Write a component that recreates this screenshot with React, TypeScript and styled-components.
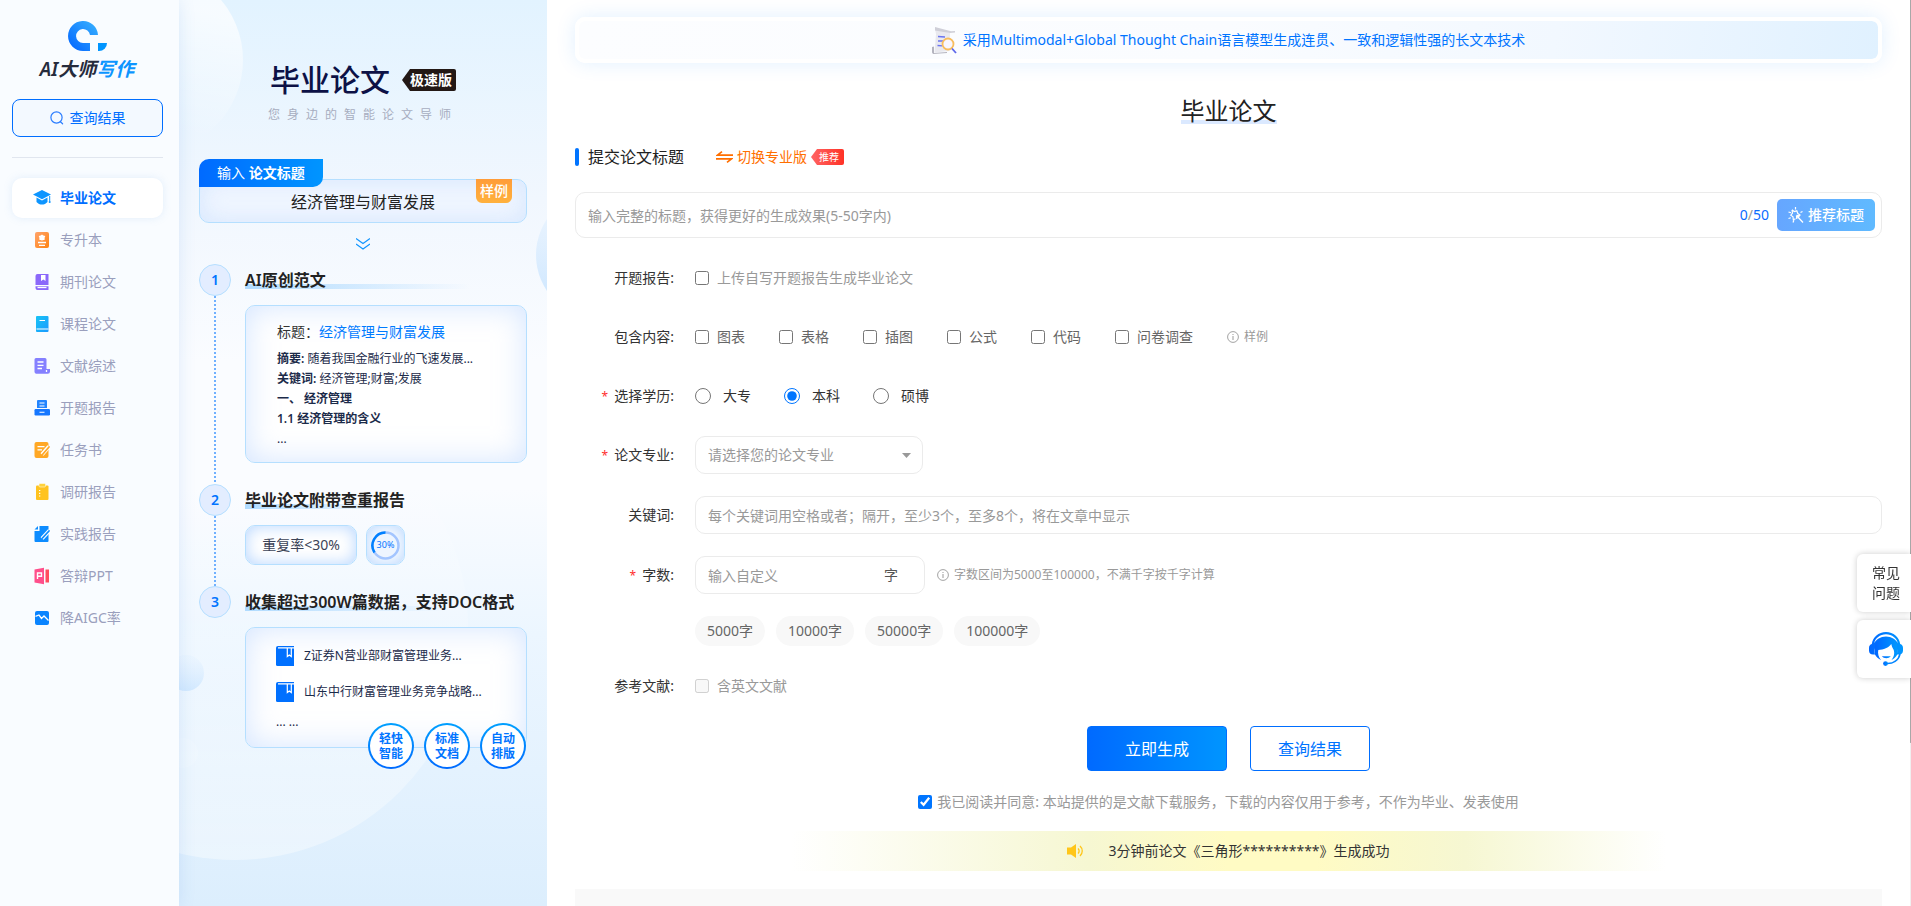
import React, { useState } from "react";
import styled, { createGlobalStyle } from "styled-components";

const GlobalStyle = createGlobalStyle`
  *, *::before, *::after { box-sizing: border-box; }
  body {
    margin: 0;
    background: #fff;
    color: #222;
    font: 14px/20px "Noto Sans", "Noto Sans CJK SC", sans-serif;
  }
  button, input, select { font: inherit; color: inherit; }
  button { cursor: pointer; }
  a { text-decoration: none; color: inherit; }
  h1, h2, h3, p, ul, ol { margin: 0; padding: 0; font-weight: 400; list-style: none; }
  svg { display: block; flex: none; }
`;

/* ---------- page ---------- */

const Page = styled.div`
  display: flex;
  align-items: stretch;
  min-height: 100vh;
`;

/* ---------- sidebar ---------- */

const Sidebar = styled.aside`
  position: relative;
  z-index: 1;
  flex: 0 0 179px;
  padding: 21px 16px 0 12px;
  background: #f9fcff;
  box-shadow: 0 0 16px rgba(60, 130, 220, 0.14);
`;

const Logo = styled.a`
  display: flex;
  flex-direction: column;
  align-items: center;
  gap: 6px;
  margin-left: -1px;
`;

const LogoName = styled.span`
  font-size: 19px;
  line-height: 24px;
  font-weight: 600;
  font-style: italic;
  color: #262b3c;

  b {
    font-weight: 600;
    color: #0d95ff;
  }
`;

const LookupButton = styled.button`
  display: flex;
  align-items: center;
  justify-content: center;
  gap: 6px;
  width: 100%;
  height: 38px;
  margin: 18px 0 20px;
  padding: 0;
  border: 1px solid #006eff;
  border-radius: 8px;
  background: #f3f9ff;
  color: #006eff;
`;

const NavList = styled.ul`
  display: flex;
  flex-direction: column;
  gap: 2px;
  padding-top: 20px;
  border-top: 1px solid #e1e6ef;
`;

const NavLink = styled.a<{ $active?: boolean }>`
  display: flex;
  align-items: center;
  gap: 9px;
  height: 40px;
  padding-left: 21px;
  border-radius: 10px;
  color: ${(p) => (p.$active ? "#006eff" : "#9a9fbd")};
  font-weight: ${(p) => (p.$active ? 700 : 400)};
  background: ${(p) => (p.$active ? "#fff" : "transparent")};
  box-shadow: ${(p) => (p.$active ? "0 0 8px rgba(120, 170, 230, 0.18)" : "none")};
`;

/* ---------- introduction panel ---------- */

const Intro = styled.section`
  position: relative;
  flex: 0 0 368px;
  padding: 60px 20px 0;
  overflow: hidden;
  background: linear-gradient(180deg, #e2f3ff 0%, #f1f7fe 22%, #fafcff 40%, #fafcff 54%, #ecf6ff 70%, #dceefd 100%);
`;

const Backdrop = styled.svg`
  position: absolute;
  top: 0;
  left: 0;
`;

const IntroBody = styled.div`
  position: relative;
`;

const IntroHead = styled.header`
  display: flex;
  flex-direction: column;
  align-items: center;
`;

const IntroTitle = styled.h2`
  display: flex;
  align-items: center;
  gap: 12px;
  font-size: 30px;
  line-height: 40px;
  font-weight: 500;
  color: #0c1146;
`;

const EditionTag = styled.span`
  height: 22px;
  padding: 0 4px 0 8px;
  border-radius: 2px;
  background: #231815;
  color: #fff;
  font-size: 14px;
  line-height: 22px;
  font-weight: 700;
  clip-path: polygon(8px 0, 100% 0, 100% 100%, 8px 100%, 0 50%);
`;

const IntroSlogan = styled.p`
  margin-top: 5px;
  font-size: 12px;
  letter-spacing: 7px;
  color: #a7adc0;
`;

const SampleTitle = styled.div`
  position: relative;
  display: flex;
  align-items: center;
  justify-content: center;
  height: 44px;
  margin-top: 54px;
  padding-top: 2px;
  border: 1px solid #b5dfff;
  border-radius: 10px;
  background: #f0f6ff;
  box-shadow: inset 0 0 24px rgba(176, 208, 252, 0.4);
  font-size: 16px;
`;

const SampleTab = styled.span`
  position: absolute;
  top: -21px;
  left: -1px;
  width: 124px;
  height: 28px;
  padding-left: 18px;
  border-radius: 10px 0 10px 0;
  background: linear-gradient(90deg, #006aff, #0095ff);
  color: #fff;
  font-size: 14px;
  line-height: 28px;
`;

const SampleMark = styled.span`
  position: absolute;
  top: -1px;
  right: 14px;
  padding: 0 4px;
  border-radius: 0 0 6px 6px;
  background: linear-gradient(180deg, #ff9c38, #ffb13d);
  color: #fff;
  font-size: 14px;
  line-height: 24px;
  font-weight: 500;
`;

const Arrows = styled.div`
  display: flex;
  align-items: center;
  justify-content: center;
  height: 41px;
`;

const Step = styled.li`
  display: grid;
  grid-template-columns: 32px 1fr;
  column-gap: 14px;
`;

const StepRail = styled.div`
  display: flex;
  flex-direction: column;
  align-items: center;

  &::after {
    content: "";
    flex: 1;
    width: 2px;
    background: repeating-linear-gradient(180deg, #6fb0ff 0 2px, transparent 2px 4px);
  }

  ${Step}:last-child &::after {
    display: none;
  }
`;

const StepNumber = styled.span`
  width: 32px;
  height: 32px;
  border: 1px solid #b5dfff;
  border-radius: 50%;
  background: #e3edff;
  color: #0074ff;
  font-weight: 600;
  line-height: 30px;
  text-align: center;
`;

const StepBody = styled.div`
  padding-bottom: 21px;
`;

const StepTitle = styled.h3<{ $mark: number }>`
  margin-bottom: 9px;
  background: linear-gradient(90deg, #b0dbff, rgba(176, 219, 255, 0)) 0 20px / ${(p) => p.$mark}px 5px no-repeat;
  font-size: 16px;
  line-height: 32px;
  font-weight: 600;
  white-space: nowrap;
`;

const Card = styled.div`
  border: 1px solid #b5dfff;
  border-radius: 10px;
  background: #fff;
  box-shadow: inset 0 0 30px rgba(170, 203, 255, 0.5);
`;

const PaperCard = styled(Card)`
  height: 158px;
  padding: 16px 31px;
  color: #1c2b4a;
  font-size: 12px;

  h4 {
    margin: 0 0 7px;
    color: #333;
    font-size: 14px;
    font-weight: 400;
  }

  em {
    color: #007bff;
    font-style: normal;
  }

  b {
    font-weight: 600;
  }
`;

const RateRow = styled.div`
  display: flex;
  gap: 9px;
`;

const RateCard = styled(Card)<{ $width: number }>`
  display: flex;
  align-items: center;
  justify-content: center;
  width: ${(p) => p.$width}px;
  height: 40px;
  box-shadow: inset 0 0 16px rgba(150, 195, 255, 0.7);
  color: #3b4357;
`;

const Ring = styled.span`
  display: grid;
  place-items: center;

  svg,
  span {
    grid-area: 1 / 1;
  }

  span {
    color: #0074ff;
    font-size: 9px;
    line-height: 12px;
  }
`;

const DataCard = styled(Card)`
  position: relative;
  height: 121px;
  padding: 18px 30px;
  color: #1c2b4a;
  font-size: 12px;
`;

const DataList = styled.ul`
  display: flex;
  flex-direction: column;
  gap: 16px;
  margin-bottom: 10px;
`;

const DataItem = styled.li`
  display: flex;
  align-items: center;
  gap: 10px;
`;

const Perks = styled.div`
  position: absolute;
  right: 0;
  bottom: -22px;
  display: flex;
  gap: 10px;
`;

const Perk = styled.span`
  display: flex;
  align-items: center;
  width: 46px;
  height: 46px;
  padding: 0 9px;
  border: 2px solid transparent;
  border-radius: 50%;
  background:
    linear-gradient(#fff, #fff) padding-box,
    linear-gradient(180deg, #00a0ff, #006aff) border-box;
  color: #0074ff;
  font-size: 12px;
  line-height: 15px;
  font-weight: 700;
`;

/* ---------- main column ---------- */

const Main = styled.main`
  flex: 1;
  min-width: 0;
  display: flex;
  flex-direction: column;
  padding: 17px 29px 0 28px;
`;

const Banner = styled.div`
  display: flex;
  align-items: center;
  justify-content: center;
  gap: 6px;
  height: 46px;
  border: 4px solid #fff;
  border-radius: 10px;
  background: linear-gradient(100deg, #fcfdff 0%, #fafcff 50%, #f2f8ff 75%, #e0f1ff 100%);
  background-clip: padding-box;
  box-shadow: 0 0 20px rgba(0, 132, 255, 0.12);
  color: #0074ff;
`;

const PageTitle = styled.h1`
  align-self: center;
  margin: 31px 0 19px;
  background: linear-gradient(#dbe9ff, #dbe9ff) 0 26px / 100% 4px no-repeat;
  font-size: 24px;
  line-height: 34px;
`;

const SectionHead = styled.div`
  display: flex;
  align-items: center;
  height: 20px;
  margin-bottom: 25px;
`;

const SectionTitle = styled.h2`
  display: flex;
  align-items: center;
  gap: 9px;
  margin-right: 32px;
  font-size: 16px;
  line-height: 20px;

  &::before {
    content: "";
    width: 4px;
    height: 18px;
    border-radius: 2px;
    background: #0074ff;
  }
`;

const SwitchLink = styled.a`
  display: flex;
  align-items: center;
  gap: 4px;
  color: #ff6f00;
`;

const HotTag = styled.span`
  padding: 0 5px 0 8px;
  border-radius: 2px;
  background: linear-gradient(90deg, #ff6464, #ff3226);
  clip-path: polygon(6px 0, 100% 0, 100% 100%, 6px 100%, 0 50%);
  color: #fff;
  font-size: 10px;
  line-height: 16px;
`;

const TitleField = styled.div`
  display: flex;
  align-items: center;
  height: 46px;
  padding: 0 6px 0 12px;
  border: 1px solid #ebebeb;
  border-radius: 10px;
`;

const BareInput = styled.input`
  flex: 1;
  min-width: 0;
  height: 36px;
  padding: 0;
  border: 0;
  outline: 0;
  background: transparent;
  color: #333;

  &::placeholder {
    color: #999;
    opacity: 1;
  }
`;

const Counter = styled.span`
  margin: 0 8px;
  color: #999;

  b {
    font-weight: 400;
    color: #0a6cff;
  }
`;

const SuggestButton = styled.button`
  display: flex;
  align-items: center;
  gap: 4px;
  height: 32px;
  padding: 0 11px;
  border: 0;
  border-radius: 5px;
  background: linear-gradient(90deg, #66a6ff, #60baff);
  color: #fff;
  font-weight: 500;
`;

const Form = styled.form`
  display: flex;
  flex-direction: column;
  gap: 21px;
  padding-top: 21px;
`;

const FieldGroup = styled.div`
  display: flex;
  flex-direction: column;
  gap: 22px;
`;

const Row = styled.div<{ $tight?: boolean }>`
  display: grid;
  grid-template-columns: 99px 1fr;
  column-gap: 21px;
  align-items: center;
  min-height: ${(p) => (p.$tight ? 30 : 38)}px;
`;

const RowLabel = styled.span<{ $required?: boolean }>`
  text-align: right;
  color: #333;

  &::before {
    content: ${(p) => (p.$required ? '"*"' : "none")};
    margin-right: 6px;
    font-size: 12px;
    color: #ff2d2d;
  }
`;

const Options = styled.div<{ $gap: number }>`
  display: flex;
  align-items: center;
  gap: ${(p) => p.$gap}px;
`;

const CheckLabel = styled.label<{ $tone?: string }>`
  display: flex;
  align-items: center;
  gap: 8px;
  color: ${(p) => p.$tone || "#666"};

  input {
    width: 14px;
    height: 14px;
    margin: 0;
    accent-color: #0075ff;
  }
`;

const RadioLabel = styled.label`
  display: flex;
  align-items: center;
  gap: 12px;
  color: #333;

  input {
    width: 16px;
    height: 16px;
    margin: 0;
    accent-color: #0075ff;
  }
`;

const Hint = styled.span`
  display: flex;
  align-items: center;
  gap: 5px;
  color: #999;
  font-size: 12px;
`;

const HintLink = styled(Hint).attrs({ as: "a", href: "#sample" })``;

const SelectWrap = styled.div`
  display: grid;
  align-items: center;
  width: 228px;

  select,
  svg {
    grid-area: 1 / 1;
  }

  svg {
    justify-self: end;
    margin-right: 12px;
    pointer-events: none;
  }
`;

const MajorSelect = styled.select`
  appearance: none;
  width: 100%;
  height: 38px;
  padding: 0 30px 0 12px;
  border: 1px solid #ebebeb;
  border-radius: 10px;
  outline: 0;
  background: #fff;
  color: #999;
`;

const Field = styled.div<{ $width?: number }>`
  display: flex;
  align-items: center;
  width: ${(p) => (p.$width ? p.$width + "px" : "100%")};
  height: 38px;
  padding: 0 26px 0 12px;
  border: 1px solid #ebebeb;
  border-radius: 10px;
  color: #555;
`;

const PresetButton = styled.button`
  height: 30px;
  padding: 0 12px;
  border: 0;
  border-radius: 15px;
  background: #f8f8f8;
  color: #666;
`;

const Actions = styled.div`
  display: flex;
  justify-content: center;
  gap: 23px;
`;

const ActionButton = styled.button<{ $primary?: boolean }>`
  width: ${(p) => (p.$primary ? 140 : 120)}px;
  height: 45px;
  padding: 0;
  border: 1px solid #006eff;
  border-radius: 4px;
  background: ${(p) => (p.$primary ? "linear-gradient(90deg, #006aff, #0095ff)" : "#fff")};
  color: ${(p) => (p.$primary ? "#fff" : "#0074ff")};
  font-size: 16px;
`;

const Agreement = styled(CheckLabel)`
  justify-content: center;
  gap: 5px;
  padding-right: 20px;
`;

const Notice = styled.p`
  display: flex;
  align-items: center;
  justify-content: center;
  gap: 24px;
  width: 67%;
  height: 40px;
  margin: 19px auto 18px;
  background: linear-gradient(
    90deg,
    rgba(246, 247, 208, 0) 0%,
    #f6f7d2 34%,
    #fffbc4 50%,
    #fffbc4 60%,
    #f6f7d2 77%,
    rgba(246, 247, 208, 0) 100%
  );
  color: #333;
`;

const Footer = styled.footer`
  flex: 1;
  min-height: 17px;
  background: #f9f9f9;
`;

/* ---------- floating tools ---------- */

const FloatTools = styled.div`
  position: fixed;
  right: 0;
  top: 554px;
  z-index: 2;
  display: flex;
  flex-direction: column;
  gap: 8px;
`;

const FloatButton = styled.button`
  display: flex;
  align-items: center;
  justify-content: center;
  width: 54px;
  height: 58px;
  padding: 0 7px 0 11px;
  border: 0;
  border-radius: 6px 0 0 6px;
  background: #fff;
  box-shadow: 0 0 6px rgba(0, 0, 0, 0.2);
  color: #333;
`;

const ScrollTrack = styled.div`
  position: fixed;
  top: 0;
  right: 0;
  bottom: 0;
  width: 1px;
  background: linear-gradient(#a8a8a8, #a8a8a8) 0 0 / 100% 82% no-repeat #f0f0f0;
`;

/* ---------- drawings ---------- */

const LogoMark = () => (
  <svg width="39" height="30" viewBox="0 0 39 30">
    <defs>
      <linearGradient id="lg" x1="0" y1="1" x2="1" y2="0">
        <stop offset="0" stopColor="#0062ff" />
        <stop offset="1" stopColor="#3ab4ff" />
      </linearGradient>
    </defs>
    <path d="M22 30h-7A15 15 0 1 1 30 14H22A7 7 0 1 0 15 22h7z" fill="url(#lg)" />
    <path d="M30 22h9a8 8 0 0 1-8 8h-1z" fill="#0095ff" />
  </svg>
);

const SearchIcon = () => (
  <svg width="14" height="14" viewBox="0 0 14 14" fill="none" stroke="#2a7dff" strokeWidth="1.2">
    <circle cx="6.5" cy="6.5" r="5.6" />
    <path d="M10.4 10.8l2.2 2" strokeLinecap="round" />
  </svg>
);

const navIcons: Record<string, React.ReactNode> = {
  cap: (
    <>
      <path d="M9 1L0 5.6l9 4.6 9-4.6z" fill="#0d95ff" />
      <path d="M3.5 8.6V13c2.8 3.4 8.2 3.4 11 0V8.6L9 11.6z" fill="#0d95ff" />
      <path d="M16.7 7v5.2" stroke="#0d95ff" />
      <circle cx="16.7" cy="13" r="1" fill="#0d95ff" />
    </>
  ),
  badge: (
    <>
      <rect x="2" y="1" width="14" height="16" rx="2" fill="url(#ni-orange)" />
      <path d="M9 3.400l1.400 1.100 1.900.600-.700 1.700.100 2L9 9.600 6.300 8.800l.100-2-.700-1.700 1.900-.600z" fill="#fff" />
      <path d="M5 11.500h8M6 14.300h6" stroke="#fff" strokeWidth="1.300" />
    </>
  ),
  journal: (
    <>
      <path d="M4.500 1H15.500v11H2.500V3A2 2 0 0 1 4.500 1zM2.500 13.200h13V17H4.500A2 2 0 0 1 2.500 15z" fill="#8b68fa" />
      <path d="M8 2h4.500v6l-2.200-1.500L8 8z" fill="#fff" />
      <path d="M4.500 14.500h9" stroke="#fff" strokeWidth="1.300" />
    </>
  ),
  book: (
    <>
      <rect x="3" y="1" width="12.500" height="16" rx="1" fill="url(#ni-cyan)" />
      <path d="M6.500 5.500H12M3.500 14h12" stroke="#fff" strokeWidth="1.200" />
    </>
  ),
  review: (
    <>
      <path d="M3 1h9a1.500 1.500 0 0 1 1.500 1.500V12H17v2.500a2.200 2.200 0 0 1-2.200 2.200H3.300A2 2 0 0 1 1.500 15V2.500A1.500 1.500 0 0 1 3 1z" fill="#8580ff" />
      <path d="M4.500 5h6M4.500 8.300h6M4.500 11.500h4.500M13.500 13v2" stroke="#fff" strokeWidth="1.300" />
    </>
  ),
  printer: (
    <>
      <path d="M5 1h8a1 1 0 0 1 1 1v7H4V2a1 1 0 0 1 1-1z" fill="#2385ff" />
      <rect x="1.500" y="10" width="15.500" height="6.500" rx="1.200" fill="#1677ff" />
      <path d="M6.500 4h5M6.500 7h5M6.500 13.300h5" stroke="#fff" strokeWidth="1.100" />
    </>
  ),
  task: (
    <>
      <rect x="1.500" y="1" width="14" height="16" rx="2" fill="#ffa826" />
      <path d="M4.500 5.700h7M4.500 8.800h4.500" stroke="#fff" strokeWidth="1.200" />
      <path d="M16 5.500L9 13.500" stroke="#fff" strokeWidth="4" />
      <path d="M16 6L9.500 13.500" stroke="#ffa826" strokeWidth="1.800" strokeLinecap="round" />
    </>
  ),
  survey: (
    <>
      <rect x="3" y="2.500" width="12.500" height="14.500" rx="1" fill="#ffc320" />
      <rect x="6" y="0.500" width="6.500" height="3.500" rx="1" fill="#ffd23b" stroke="#fff" strokeWidth="0.500" />
      <path d="M6 7.500h1.300M6 10.300h1.300M6 13h1.300" stroke="#fff" strokeWidth="1.200" />
    </>
  ),
  practice: (
    <>
      <path d="M6.500 1H15.500v15a1 1 0 0 1-1 1H2.500a1 1 0 0 1-1-1V6H6.500z" fill="#0d8cff" />
      <path d="M1.500 4.500L5 1v3.500z" fill="#0d8cff" />
      <path d="M16.500 5.500L9 13.500" stroke="#fff" strokeWidth="4" />
      <path d="M16 6L9.500 13" stroke="#0d8cff" strokeWidth="1.800" strokeLinecap="round" />
    </>
  ),
  slides: (
    <>
      <path d="M1.500 2.500L11 .800v16.400l-9.500-1.700z" fill="#ff4f8b" />
      <path d="M12.500 2.500H16v13h-3.500z" fill="#ff4d5f" />
      <path d="M4.500 12V6h4v3.300h-4" stroke="#fff" strokeWidth="1.400" fill="none" />
    </>
  ),
  chart: (
    <>
      <rect x="2" y="2" width="14" height="14" rx="2" fill="#0a84ff" />
      <path d="M2.500 7.300L6 6l2.500 3.500L11 7l4.500 4.500" stroke="#fff" strokeWidth="1.300" fill="none" />
    </>
  ),
};

const NavIcon = ({ name }: { name: string }) => (
  <svg width="18" height="18" viewBox="0 0 18 18">
    <defs>
      <linearGradient id="ni-orange" x1="0" y1="0" x2="1" y2="1">
        <stop offset="0" stopColor="#ffa36b" />
        <stop offset="1" stopColor="#ff8412" />
      </linearGradient>
      <linearGradient id="ni-cyan" x1="0" y1="0" x2="1" y2="1">
        <stop offset="0" stopColor="#18c4f5" />
        <stop offset="1" stopColor="#1b9aff" />
      </linearGradient>
    </defs>
    {navIcons[name]}
  </svg>
);

const IntroBackdrop = () => (
  <Backdrop width="368" height="906" viewBox="0 0 368 906">
    <defs>
      <linearGradient id="b1" x1="0.6" y1="0" x2="0.4" y2="1">
        <stop offset="0.2" stopColor="#fff" stopOpacity="0.7" />
        <stop offset="0.85" stopColor="#fff" stopOpacity="0" />
      </linearGradient>
      <linearGradient id="b2" x1="0" y1="0" x2="0" y2="1">
        <stop offset="0" stopColor="#fff" stopOpacity="0" />
        <stop offset="1" stopColor="#fff" stopOpacity="0.38" />
      </linearGradient>
      <linearGradient id="b3" x1="0" y1="0" x2="0" y2="1">
        <stop offset="0.1" stopColor="#cfe7ff" stopOpacity="0.2" />
        <stop offset="1" stopColor="#c6e3ff" />
      </linearGradient>
    </defs>
    <circle cx="-29" cy="60" r="93" fill="url(#b1)" />
    <circle cx="56" cy="627" r="233" fill="url(#b2)" />
    <circle cx="421" cy="255" r="64" fill="url(#b3)" />
    <circle cx="7" cy="673" r="18" fill="url(#b3)" opacity="0.7" />
    <circle cx="4" cy="753" r="15" fill="#fff" opacity="0.15" />
  </Backdrop>
);

const DoubleChevron = () => (
  <svg width="14" height="12" viewBox="0 0 14 12" fill="none" stroke="#1296ff" strokeWidth="1.200">
    <path d="M0 .500l7 5 7-5M0 6l7 5 7-5" />
  </svg>
);

const RateRing = () => (
  <Ring>
    <svg width="29" height="29" viewBox="0 0 29 29" fill="none" strokeWidth="2.500">
      <circle cx="14.500" cy="14.500" r="13" stroke="#a3c5ff" fill="#eef5ff" />
      <path d="M14.500 1.500A13 13 0 0 0 3.500 21.500" stroke="#0080ff" />
    </svg>
    <span>30%</span>
  </Ring>
);

const BookIcon = () => (
  <svg width="18" height="20" viewBox="0 0 18 20">
    <path d="M2 0h16v20H1.500A1.500 1.500 0 0 1 0 18.500V2a2 2 0 0 1 2-2z" fill="#0070ff" />
    <path d="M2 1.800h16M11.300 2v8.500l2-1.500 2 1.500V2" stroke="#fff" strokeWidth="1.200" fill="none" />
  </svg>
);

const ScrollIcon = () => (
  <svg width="25" height="27" viewBox="0 0 25 27">
    <path d="M3 2l15 4-.500 18-15 1.500L4 7z" fill="#e9e9ef" />
    <path d="M3 0l16 4.300 4-.300v1.500l-5 .500L3 3.500z" fill="#cfcfd8" />
    <path d="M0 20l2-.500V26l13-1v1L1 27 0 25.500z" fill="#b4b4bf" />
    <path d="M6 9.500l7 .500M6 14h5M5.500 18.500l5 .300" stroke="#6a74f0" strokeWidth="1.300" />
    <circle cx="16" cy="17" r="5.500" fill="#f8f6ff" stroke="#f8bd5e" strokeWidth="1.800" />
    <path d="M20 21.500l4 4.500" stroke="#5c66ea" strokeWidth="1.800" />
  </svg>
);

const SwapIcon = () => (
  <svg width="17" height="12" viewBox="0 0 17 12" fill="none" stroke="#ff6f00" strokeWidth="1.700">
    <path d="M17 4.200H1.500L6 .700M0 7.800h15.500L11 11.300" />
  </svg>
);

const WandIcon = () => (
  <svg width="16" height="16" viewBox="0 0 16 16" fill="none" stroke="#fff" strokeWidth="1.200">
    <path d="M7.500 0v2.500M.500 5l2.500.800M.500 11.500l2.300-.800M5 15.500l.900-2.300M12.500 5.500l2-1M4 2.800l2.200 1.700 2.600-.700 1 2.700 2.200 1.500-1.800 1.800M4 2.800l.500 3.200-1.700 2.200 2.200 1.600.300 2.900 2.200-1" />
    <path d="M8.500 8.500l6.500 7M8.500 8.500l.300 3.500M8.500 8.500l3.200.300" strokeWidth="1.300" />
  </svg>
);

const InfoIcon = () => (
  <svg width="12" height="12" viewBox="0 0 12 12" fill="none" stroke="#999">
    <circle cx="6" cy="6" r="5.400" strokeWidth="0.900" />
    <path d="M6 5v4M6 3v1" />
  </svg>
);

const Caret = () => (
  <svg width="9" height="5" viewBox="0 0 9 5">
    <path d="M0 0h9L4.500 5z" fill="#999" />
  </svg>
);

const SpeakerIcon = () => (
  <svg width="17" height="14" viewBox="0 0 17 14">
    <path d="M0 3.500h4L9 0v14l-5-3.500H0z" fill="#ffc61a" />
    <path d="M11 4.500c1.500 1.300 1.500 3.700 0 5M13 2c3 2.700 3 7.300 0 10" stroke="#ffc61a" strokeWidth="1.300" fill="none" />
  </svg>
);

const ServiceIcon = () => (
  <svg width="34" height="34" viewBox="0 0 34 34">
    <defs>
      <linearGradient id="sv" x1="0" y1="0" x2="1" y2="0">
        <stop offset="0" stopColor="#0066ff" />
        <stop offset="1" stopColor="#0098ff" />
      </linearGradient>
    </defs>
    <g fill="url(#sv)">
      <path d="M17 0C9.500 0 3.800 5 2.800 12 1 12.500 0 14 0 16v2.500C0 21 1.500 22.500 4 22.500h2C5 16 7 6.500 17 6.500S29 16 28 22.500h2c2.500 0 4-1.500 4-4V16c0-2-1-3.500-2.800-4C30.200 5 24.500 0 17 0zm0 2.200c6 0 10.800 4 12 9.300C27 7.500 22.500 4.500 17 4.500S7 7.500 5 11.500C6.200 6.200 11 2.200 17 2.200z" />
      <path d="M6 13C8 8 12 5.500 17 5.500S26.500 8 28 13l.300 9.500c-1.300 2.500-3.300 4.500-5.800 5.500 2.500-3 3.500-7 2-10.500-1-1.500-1.800-3.500-2.200-5.500-2.500 3.800-7.800 5.500-13 6-.800 3.500.200 7 2.700 10-2.500-1-4.800-3-6-5.500z" />
      <path d="M12.800 24.200h9c-2 2.600-7 2.600-9 0z" />
      <circle cx="16.500" cy="31.600" r="2.400" />
    </g>
    <path d="M17 31.500c7 .5 12.500-3 14-9.500" stroke="#0085ff" strokeWidth="1.600" fill="none" />
  </svg>
);

/* ---------- content ---------- */

const navItems = [
  ["cap", "毕业论文"],
  ["badge", "专升本"],
  ["journal", "期刊论文"],
  ["book", "课程论文"],
  ["review", "文献综述"],
  ["printer", "开题报告"],
  ["task", "任务书"],
  ["survey", "调研报告"],
  ["practice", "实践报告"],
  ["slides", "答辩PPT"],
  ["chart", "降AIGC率"],
];

const contents = ["图表", "表格", "插图", "公式", "代码", "问卷调查"];
const degrees = ["大专", "本科", "硕博"];
const presets = ["5000", "10000", "50000", "100000"];

export default function App() {
  const [title, setTitle] = useState("");
  const [degree, setDegree] = useState("本科");
  const [words, setWords] = useState("");
  const [agreed, setAgreed] = useState(true);

  return (
    <Page>
      <GlobalStyle />
      <Sidebar>
        <Logo href="#home">
          <LogoMark />
          <LogoName>
            AI大师<b>写作</b>
          </LogoName>
        </Logo>
        <LookupButton type="button">
          <SearchIcon />
          查询结果
        </LookupButton>
        <nav>
          <NavList>
            {navItems.map(([icon, label], i) => (
              <li key={label}>
                <NavLink href={`#${icon}`} $active={i === 0}>
                  <NavIcon name={icon} />
                  {label}
                </NavLink>
              </li>
            ))}
          </NavList>
        </nav>
      </Sidebar>

      <Intro>
        <IntroBackdrop />
        <IntroBody>
          <IntroHead>
            <IntroTitle>
              毕业论文<EditionTag>极速版</EditionTag>
            </IntroTitle>
            <IntroSlogan>您身边的智能论文导师</IntroSlogan>
          </IntroHead>
          <SampleTitle>
            <SampleTab>
              输入 <b>论文标题</b>
            </SampleTab>
            经济管理与财富发展
            <SampleMark>样例</SampleMark>
          </SampleTitle>
          <Arrows>
            <DoubleChevron />
          </Arrows>
          <ol>
            <Step>
              <StepRail>
                <StepNumber>1</StepNumber>
              </StepRail>
              <StepBody>
                <StepTitle $mark={225}>AI原创范文</StepTitle>
                <PaperCard>
                  <h4>
                    标题：<em>经济管理与财富发展</em>
                  </h4>
                  <p>
                    <b>摘要:</b> 随着我国金融行业的飞速发展...
                  </p>
                  <p>
                    <b>关键词:</b> 经济管理;财富;发展
                  </p>
                  <p>
                    <b>一、 经济管理</b>
                  </p>
                  <p>
                    <b>1.1 经济管理的含义</b>
                  </p>
                  <p>...</p>
                </PaperCard>
              </StepBody>
            </Step>
            <Step>
              <StepRail>
                <StepNumber>2</StepNumber>
              </StepRail>
              <StepBody>
                <StepTitle $mark={160}>毕业论文附带查重报告</StepTitle>
                <RateRow>
                  <RateCard $width={112}>重复率&lt;30%</RateCard>
                  <RateCard $width={39}>
                    <RateRing />
                  </RateCard>
                </RateRow>
              </StepBody>
            </Step>
            <Step>
              <StepRail>
                <StepNumber>3</StepNumber>
              </StepRail>
              <StepBody>
                <StepTitle $mark={200}>收集超过300W篇数据，支持DOC格式</StepTitle>
                <DataCard>
                  <DataList>
                    <DataItem>
                      <BookIcon />
                      Z证券N营业部财富管理业务...
                    </DataItem>
                    <DataItem>
                      <BookIcon />
                      山东中行财富管理业务竞争战略...
                    </DataItem>
                  </DataList>
                  <p>... ...</p>
                  <Perks>
                    <Perk>轻快智能</Perk>
                    <Perk>标准文档</Perk>
                    <Perk>自动排版</Perk>
                  </Perks>
                </DataCard>
              </StepBody>
            </Step>
          </ol>
        </IntroBody>
      </Intro>

      <Main>
        <Banner>
          <ScrollIcon />
          采用Multimodal+Global Thought Chain语言模型生成连贯、一致和逻辑性强的长文本技术
        </Banner>
        <PageTitle>毕业论文</PageTitle>
        <SectionHead>
          <SectionTitle>提交论文标题</SectionTitle>
          <SwitchLink href="#pro">
            <SwapIcon />
            切换专业版
            <HotTag>推荐</HotTag>
          </SwitchLink>
        </SectionHead>
        <TitleField>
          <BareInput
            aria-label="论文标题"
            placeholder="输入完整的标题，获得更好的生成效果(5-50字内)"
            maxLength={50}
            value={title}
            onChange={(e) => setTitle(e.target.value)}
          />
          <Counter>
            <b>{title.length}</b>/<b>50</b>
          </Counter>
          <SuggestButton type="button">
            <WandIcon />
            推荐标题
          </SuggestButton>
        </TitleField>

        <Form onSubmit={(e) => e.preventDefault()}>
          <Row>
            <RowLabel>开题报告:</RowLabel>
            <CheckLabel $tone="#999">
              <input type="checkbox" />
              上传自写开题报告生成毕业论文
            </CheckLabel>
          </Row>
          <Row role="group" aria-labelledby="contents">
            <RowLabel id="contents">包含内容:</RowLabel>
            <Options $gap={34}>
              {contents.map((c) => (
                <CheckLabel key={c}>
                  <input type="checkbox" />
                  {c}
                </CheckLabel>
              ))}
              <HintLink>
                <InfoIcon />
                样例
              </HintLink>
            </Options>
          </Row>
          <Row role="radiogroup" aria-labelledby="degree">
            <RowLabel id="degree" $required>
              选择学历:
            </RowLabel>
            <Options $gap={33}>
              {degrees.map((d) => (
                <RadioLabel key={d}>
                  <input type="radio" name="degree" checked={degree === d} onChange={() => setDegree(d)} />
                  {d}
                </RadioLabel>
              ))}
            </Options>
          </Row>
          <FieldGroup>
            <Row>
              <RowLabel as="label" htmlFor="major" $required>
                论文专业:
              </RowLabel>
              <SelectWrap>
                <MajorSelect id="major" defaultValue="">
                  <option value="">请选择您的论文专业</option>
                </MajorSelect>
                <Caret />
              </SelectWrap>
            </Row>
            <Row>
              <RowLabel as="label" htmlFor="keywords">
                关键词:
              </RowLabel>
              <Field>
                <BareInput id="keywords" placeholder="每个关键词用空格或者；隔开，至少3个，至多8个，将在文章中显示" />
              </Field>
            </Row>
            <Row>
              <RowLabel as="label" htmlFor="words" $required>
                字数:
              </RowLabel>
              <Options $gap={12}>
                <Field $width={230}>
                  <BareInput
                    id="words"
                    placeholder="输入自定义"
                    value={words}
                    onChange={(e) => setWords(e.target.value)}
                  />
                  字
                </Field>
                <Hint>
                  <InfoIcon />
                  字数区间为5000至100000，不满千字按千字计算
                </Hint>
              </Options>
            </Row>
            <Row $tight>
              <span />
              <Options $gap={11}>
                {presets.map((n) => (
                  <PresetButton key={n} type="button" onClick={() => setWords(n)}>
                    {n}字
                  </PresetButton>
                ))}
              </Options>
            </Row>
          </FieldGroup>
          <Row>
            <RowLabel>参考文献:</RowLabel>
            <CheckLabel $tone="#999">
              <input type="checkbox" disabled />
              含英文文献
            </CheckLabel>
          </Row>
          <Actions>
            <ActionButton type="submit" $primary>
              立即生成
            </ActionButton>
            <ActionButton type="button">查询结果</ActionButton>
          </Actions>
          <Agreement $tone="#999">
            <input type="checkbox" checked={agreed} onChange={(e) => setAgreed(e.target.checked)} />
            我已阅读并同意: 本站提供的是文献下载服务，下载的内容仅用于参考，不作为毕业、发表使用
          </Agreement>
        </Form>
        <Notice>
          <SpeakerIcon />
          3分钟前论文《三角形**********》生成成功
        </Notice>
        <Footer />
      </Main>

      <FloatTools>
        <FloatButton type="button">
          常见
          <br />
          问题
        </FloatButton>
        <FloatButton type="button" aria-label="在线客服">
          <ServiceIcon />
        </FloatButton>
      </FloatTools>
      <ScrollTrack />
    </Page>
  );
}
